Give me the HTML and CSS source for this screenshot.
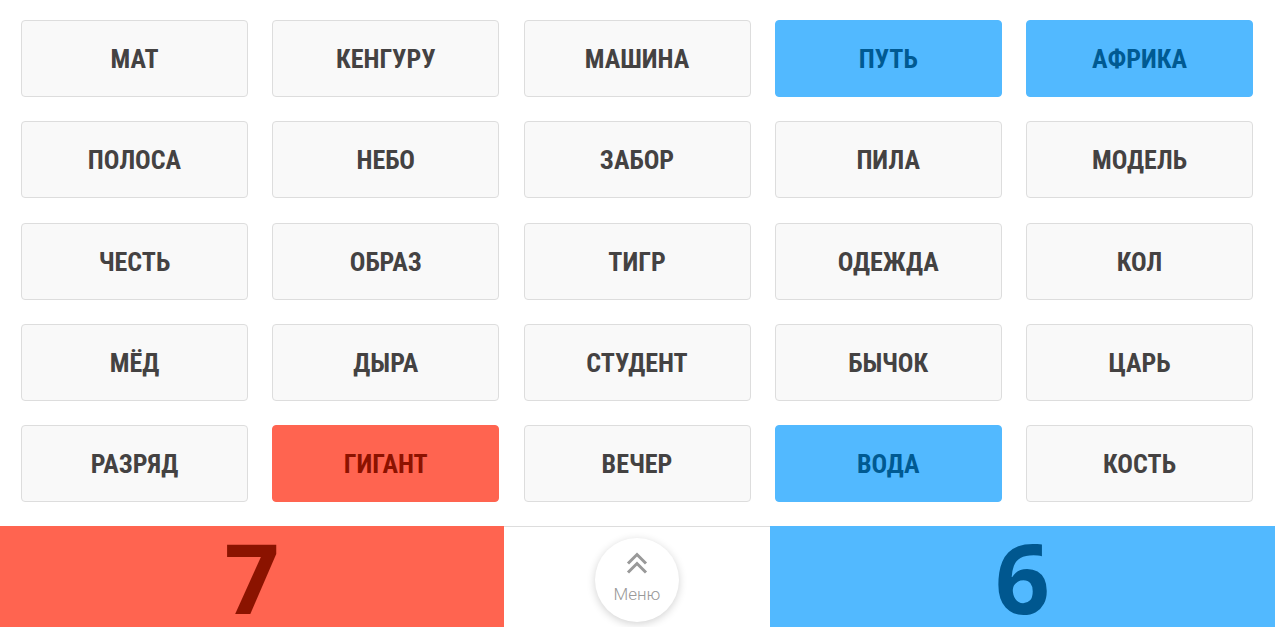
FILE: index.html
```html
<!DOCTYPE html>
<html lang="ru">
<head>
<meta charset="utf-8">
<title>Кодовые имена</title>
<link rel="stylesheet" href="styles.css">
</head>
<body>
<main class="board">
  <div class="card">МАТ</div>
  <div class="card">КЕНГУРУ</div>
  <div class="card">МАШИНА</div>
  <div class="card card-blue">ПУТЬ</div>
  <div class="card card-blue">АФРИКА</div>

  <div class="card">ПОЛОСА</div>
  <div class="card">НЕБО</div>
  <div class="card">ЗАБОР</div>
  <div class="card">ПИЛА</div>
  <div class="card">МОДЕЛЬ</div>

  <div class="card">ЧЕСТЬ</div>
  <div class="card">ОБРАЗ</div>
  <div class="card">ТИГР</div>
  <div class="card">ОДЕЖДА</div>
  <div class="card">КОЛ</div>

  <div class="card">МЁД</div>
  <div class="card">ДЫРА</div>
  <div class="card">СТУДЕНТ</div>
  <div class="card">БЫЧОК</div>
  <div class="card">ЦАРЬ</div>

  <div class="card">РАЗРЯД</div>
  <div class="card card-red">ГИГАНТ</div>
  <div class="card">ВЕЧЕР</div>
  <div class="card card-blue">ВОДА</div>
  <div class="card">КОСТЬ</div>
</main>
<footer class="scorebar">
  <div class="score score-red">7</div>
  <div class="menu-cell">
    <button class="menu-btn" type="button">
      <svg class="menu-icon" width="24" height="22" viewBox="0 0 24 22" aria-hidden="true">
        <polyline points="3,11.5 12,2.5 21,11.5" fill="none" stroke="#999" stroke-width="3"/>
        <polyline points="3,20.5 12,11.5 21,20.5" fill="none" stroke="#999" stroke-width="3"/>
      </svg>
      <span class="menu-label">Меню</span>
    </button>
  </div>
  <div class="score score-blue">6</div>
</footer>
</body>
</html>
```
FILE: styles.css
```css
html, body {
  margin: 0;
  padding: 0;
  background: #ffffff;
}

body {
  width: 1275px;
  height: 627px;
  overflow: hidden;
  font-family: Roboto, "Noto Sans", sans-serif;
}

.board {
  display: grid;
  grid-template-columns: repeat(5, 227px);
  grid-auto-rows: 77px;
  column-gap: 24.25px;
  row-gap: 24.25px;
  padding: 20px 0 0 21px;
  height: 506px;
  box-sizing: border-box;
}

.card {
  display: flex;
  align-items: center;
  justify-content: center;
  padding-top: 1px;
  background: #f9f9f9;
  border: 1px solid #dddddd;
  border-radius: 4px;
  box-sizing: border-box;
  color: #444242;
  font-family: Roboto, sans-serif;
  font-weight: 700;
  font-size: 26px;
  font-stretch: 75%;
}

.card-blue {
  background: #52b9ff;
  border-color: #52b9ff;
  color: #005a92;
}

.card-red {
  background: #ff6450;
  border-color: #ff6450;
  color: #8c1200;
}

.scorebar {
  display: grid;
  grid-template-columns: 504px 266px 505px;
  height: 101px;
  margin-top: 20px;
}

.score {
  font-family: "Open Sans", sans-serif;
  font-weight: 700;
  font-size: 96px;
  line-height: 101px;
  text-align: center;
}

.score-red {
  background: #ff6450;
  color: #8b1300;
}

.score-blue {
  background: #52b9ff;
  color: #00578f;
}

.menu-cell {
  border-top: 1px solid #dddddd;
  display: flex;
  justify-content: center;
  padding-top: 11px;
  box-sizing: border-box;
}

.menu-btn {
  width: 84px;
  height: 84px;
  border-radius: 50%;
  border: none;
  background: #ffffff;
  box-shadow: 0 2px 8px rgba(0, 0, 0, 0.18);
  display: flex;
  flex-direction: column;
  align-items: center;
  padding: 14px 0 0;
  box-sizing: border-box;
  cursor: pointer;
}

.menu-icon {
  display: block;
}

.menu-label {
  margin-top: 10px;
  font-family: Roboto, sans-serif;
  font-weight: 300;
  font-size: 17px;
  line-height: 20px;
  color: #999999;
}
```
